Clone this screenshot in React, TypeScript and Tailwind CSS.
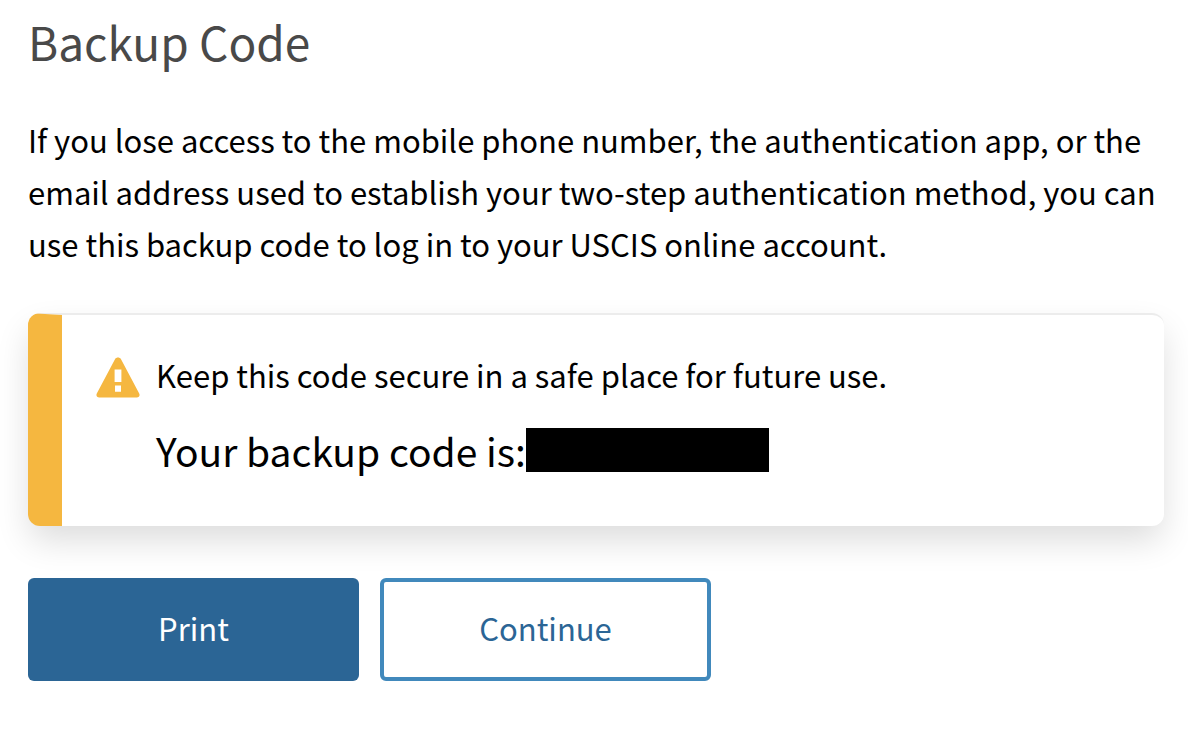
import React from 'react';

const WarningIcon: React.FC = () => (
  <svg viewBox="0 0 44 41" className="w-11 h-[41px] shrink-0" aria-hidden="true">
    <path
      fill="#f5b740"
      fillRule="evenodd"
      d="M19.1 2.1C20.4.1 23.6.1 24.9 2.1L43.2 36.6C44.2 38.6 43 40.4 40.8 40.4H3.2C1 40.4-.2 38.6.8 36.6ZM18.6 12.6V25H25.4V12.6ZM19 28.4V34.8H25V28.4Z"
    />
  </svg>
);

interface CodeAlertProps {
  message: string;
  label: string;
}

const CodeAlert: React.FC<CodeAlertProps> = ({ message, label }) => (
  <section className="mt-[43px] flex gap-4 rounded-xl border-t-2 border-l-[34px] border-t-[#ececec] border-l-[#f5b740] bg-white pt-[34px] pb-11 px-[34px] shadow-[0_16px_34px_-2px_rgba(0,0,0,0.14)]">
    <div className="pt-2">
      <WarningIcon />
    </div>
    <div className="flex-1">
      <p className="text-[31px] leading-[52px]">{message}</p>
      <p className="mt-[17px] flex flex-wrap items-center text-[39px] leading-[64px]">
        {label}
        <span className="h-11 w-[243px] bg-black" />
      </p>
    </div>
  </section>
);

const App: React.FC = () => {
  return (
    <main className="bg-white pt-[13px] pb-14 pl-7 pr-6 font-['Noto_Sans_CJK_SC',sans-serif] text-black">
      <h1 className="text-[46px] leading-[56px] text-[#494949]">Backup Code</h1>
      <p className="mt-[45px] text-[31px] leading-[52px]">
        If you lose access to the mobile phone number, the authentication app, or the email address used to establish
        your two-step authentication method, you can use this backup code to log in to your USCIS online account.
      </p>

      <CodeAlert message="Keep this code secure in a safe place for future use." label="Your backup code is:" />

      <div className="mt-[52px] flex flex-wrap gap-[21px]">
        <button
          type="button"
          className="h-[103px] w-[331px] rounded-md bg-[#2b6595] pb-1 text-[31px] leading-[52px] text-white"
        >
          Print
        </button>
        <button
          type="button"
          className="h-[103px] w-[331px] rounded-md border-4 border-[#4189bc] bg-white pb-1 text-[31px] leading-[52px] text-[#2b6595]"
        >
          Continue
        </button>
      </div>
    </main>
  );
};

export default App;
